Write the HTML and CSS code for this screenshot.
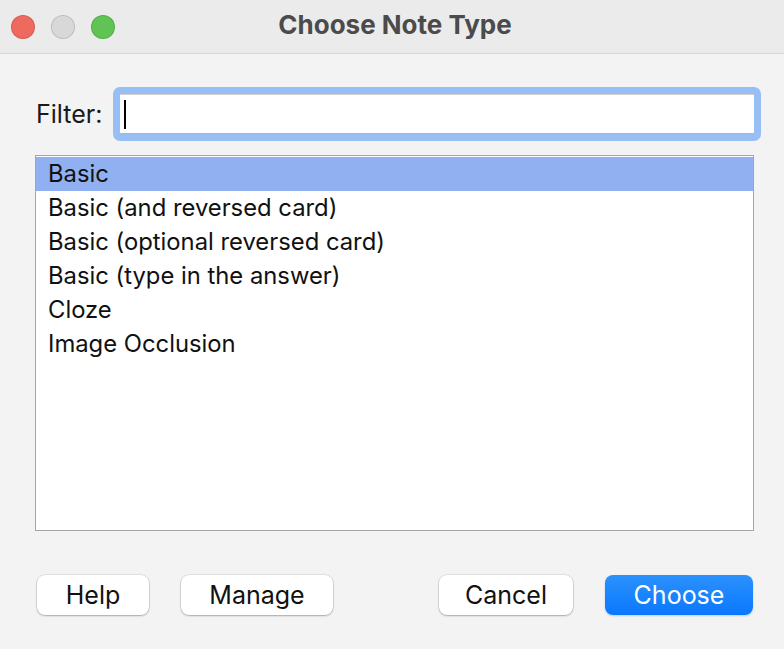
FILE: index.html
```html
<!DOCTYPE html>
<html lang="en">
<head>
<meta charset="utf-8">
<title>Choose Note Type</title>
<link rel="stylesheet" href="styles.css">
</head>
<body>
<div class="window">
  <div class="titlebar">
    <div class="lights">
      <span class="light close"></span>
      <span class="light min"></span>
      <span class="light max"></span>
    </div>
    <div class="title">Choose Note Type</div>
  </div>

  <div class="content">
    <div class="filter-row">
      <label class="filter-label">Filter:</label>
      <div class="focus-ring">
        <div class="field"><span class="caret"></span></div>
      </div>
    </div>

    <ul class="list">
      <li class="selected">Basic</li>
      <li>Basic (and reversed card)</li>
      <li>Basic (optional reversed card)</li>
      <li>Basic (type in the answer)</li>
      <li>Cloze</li>
      <li>Image Occlusion</li>
    </ul>

    <div class="buttons">
      <button class="btn help">Help</button>
      <button class="btn manage">Manage</button>
      <span class="spacer"></span>
      <button class="btn cancel">Cancel</button>
      <button class="btn primary choose">Choose</button>
    </div>
  </div>
</div>
</body>
</html>
```

FILE: styles.css
```css
html, body { margin: 0; padding: 0; }
body {
  width: 784px;
  height: 649px;
  overflow: hidden;
  font-family: Inter, "Liberation Sans", sans-serif;
  background: #f3f3f3;
}
.window { height: 649px; display: flex; flex-direction: column; }

.titlebar {
  height: 53px;
  background: #ebebeb;
  border-bottom: 1px solid #d6d6d6;
  display: flex;
  align-items: center;
  position: relative;
}
.lights { display: flex; gap: 16px; padding-left: 11px; }
.light {
  width: 22px; height: 22px;
  border-radius: 50%;
  border: 1px solid rgba(0,0,0,0.12);
}
.close { background: #ee6a5f; }
.min { background: #d8d8d8; }
.max { background: #5fc454; }
.title {
  position: absolute;
  left: 0; right: 0; top: 0;
  line-height: 49px;
  text-align: center;
  font-size: 26px;
  font-weight: 700;
  color: #4b4b4b;
  padding-left: 6px;
}

.content { flex: 1; padding: 33px 23px 0 35px; }

.filter-row { display: flex; align-items: center; }
.filter-label { font-size: 25px; color: #1a1a1a; margin-right: 11px; margin-left: 1px; }
.focus-ring {
  flex: 1;
  background: #97bef5;
  border-radius: 7px;
  padding: 7px;
}
.field {
  height: 40px;
  background: #fff;
  border-top: 1px solid #d0d0d0;
  border-bottom: 1px solid #b5b5b5;
  box-sizing: border-box;
  padding: 5px 0 0 4px;
}
.caret { display: block; width: 2px; height: 29px; background: #000; }

.list {
  list-style: none;
  margin: 14px 0 0 0;
  padding: 1px 0 0 0;
  width: 719px;
  height: 376px;
  box-sizing: border-box;
  background: #fff;
  border: 1px solid #a5a5a5;
}
.list li {
  height: 34px;
  line-height: 34px;
  padding-left: 12px;
  font-size: 23.8px;
  color: #111;
}
.list li.selected { background: #91b0f1; }

.buttons { display: flex; align-items: center; margin-top: 44px; padding-left: 2px; width: 716px; }
.btn {
  height: 40px;
  border: none;
  border-radius: 8px;
  background: #fff;
  box-shadow: 0 0 0 0.5px rgba(0,0,0,0.15), 0 1px 2px rgba(0,0,0,0.25);
  font-family: Inter, "Liberation Sans", sans-serif;
  font-size: 25px;
  color: #111;
  padding: 0;
}
.help { width: 112px; }
.manage { width: 152px; margin-left: 32px; }
.spacer { flex: 1; }
.cancel { width: 134px; }
.choose { width: 148px; margin-left: 32px; }
.primary {
  background: linear-gradient(#2b91fc, #0a78fe);
  color: #fff;
  box-shadow: 0 1px 2px rgba(0,100,255,0.25);
}
```
